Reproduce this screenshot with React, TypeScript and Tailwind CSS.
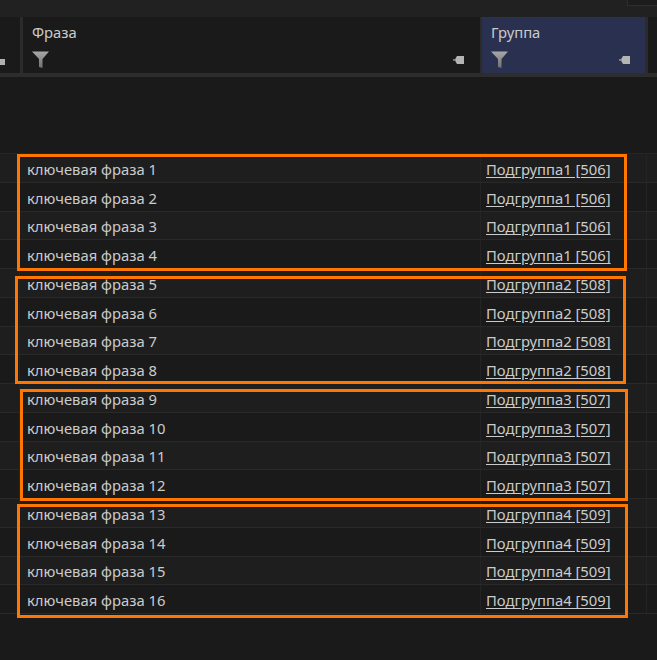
const rows = Array.from({ length: 16 }, (_, i) => {
  const groups = [
    { name: 'Подгруппа1', id: 506 },
    { name: 'Подгруппа2', id: 508 },
    { name: 'Подгруппа3', id: 507 },
    { name: 'Подгруппа4', id: 509 },
  ];
  const g = groups[Math.floor(i / 4)];
  return { phrase: `ключевая фраза ${i + 1}`, group: `${g.name} [${g.id}]` };
});

function FilterIcon() {
  return (
    <svg width="17" height="17" viewBox="0 0 17 17" className="block">
      <defs>
        <linearGradient id="funnel" x1="0" y1="0" x2="0" y2="1">
          <stop offset="0" stopColor="#a8a8a8" />
          <stop offset="1" stopColor="#707070" />
        </linearGradient>
      </defs>
      <path d="M0 0.5 H17 L10.5 8 V17 L7 16 V8 Z" fill="url(#funnel)" />
    </svg>
  );
}

function PinIcon() {
  return (
    <svg width="11" height="8" viewBox="0 0 11 8" className="block">
      <path d="M0 3.2 H4 V4.6 H0 Z" fill="#a0a0a0" />
      <path d="M2.5 2.5 L4 0 H11 V8 H4 L2.5 5.5 Z" fill="#b4b4b4" />
    </svg>
  );
}

function Box({ className }: { className: string }) {
  return <div className={`absolute border-[3px] border-[#ff7600] ${className}`} />;
}

export default function App() {
  return (
    <div className="relative h-[660px] w-[657px] overflow-hidden bg-[#1a1a1a] font-['Noto_Sans','Open_Sans',sans-serif] text-[14.8px] text-[#cbcbcb]">
      {/* top strip */}
      <div className="flex h-[17px] justify-end bg-[#212121]">
        <div className="h-[6px] w-[30px] border-b border-l border-[#2e2e2e] bg-[#1c1c1c]" />
      </div>

      {/* column headers */}
      <div className="flex h-[56px]">
        <div className="flex w-[23px] items-end border-r-[3px] border-[#2b2b2b] pb-[8px]">
          <div className="h-[6px] w-[5px] bg-[#b0b0b0]" />
        </div>
        <div className="flex w-[457px] flex-col justify-between pb-[5px] pl-[9px] pr-[16px] pt-[4px]">
          <span className="leading-[22px]">Фраза</span>
          <div className="flex items-end justify-between">
            <FilterIcon />
            <div className="mb-[4px]">
              <PinIcon />
            </div>
          </div>
        </div>
        <div className="flex w-[168px] flex-col justify-between border-l-[2px] border-r-[3px] border-[#2b2b2b] bg-[#2a3150] pb-[5px] pl-[9px] pr-[15px] pt-[4px]">
          <span className="leading-[22px]">Группа</span>
          <div className="flex items-end justify-between">
            <FilterIcon />
            <div className="mb-[4px]">
              <PinIcon />
            </div>
          </div>
        </div>
      </div>
      <div className="h-[4px] bg-[#2d2d2d]" />

      {/* empty band above rows */}
      <div className="h-[76px]" />

      {/* rows */}
      <div className="border-t border-[#252525]">
        {rows.map((r, i) => (
          <div
            key={r.phrase}
            className={`flex h-[28.75px] border-b border-[#292929] ${i % 2 === 0 ? 'bg-[#1e1e1e]' : 'bg-[#1a1a1a]'}`}
          >
            <div className="w-[20px] border-r border-[#242424]" />
            <div className="flex w-[460px] items-center pl-[7px] pt-[2px]">
              <span className="whitespace-nowrap">{r.phrase}</span>
            </div>
            <div className="flex w-[167px] items-center border-l border-r border-[#242424] pl-[5px] pt-[2px]">
              <a className="whitespace-nowrap underline underline-offset-2">{r.group}</a>
            </div>
          </div>
        ))}
      </div>

      {/* orange annotation frames */}
      <Box className="left-[17px] top-[154px] h-[117px] w-[610px]" />
      <Box className="left-[15px] top-[276px] h-[108px] w-[611px]" />
      <Box className="left-[20px] top-[389px] h-[112px] w-[608px]" />
      <Box className="left-[17px] top-[504px] h-[114px] w-[611px]" />
    </div>
  );
}
